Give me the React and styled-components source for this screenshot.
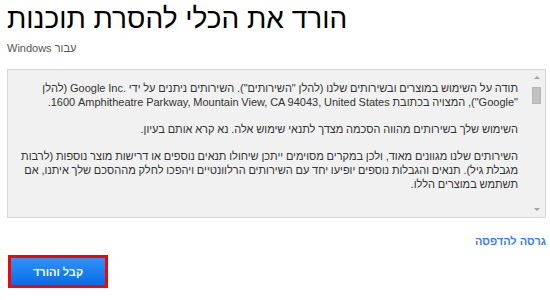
import React from 'react'
import styled, {createGlobalStyle} from 'styled-components'

const GlobalStyle = createGlobalStyle`
  html, body {
    margin: 0;
    padding: 0;
    background: #fff;
    font-family: "Liberation Sans", Arial, sans-serif;
  }
`

const paragraphs = [
    'תודה על השימוש במוצרים ובשירותים שלנו (להלן "השירותים"). השירותים ניתנים על ידי .Google Inc (להלן "Google"), המצויה בכתובת \u200E1600 Amphitheatre Parkway, Mountain View, CA 94043, United States.',
    'השימוש שלך בשירותים מהווה הסכמה מצדך לתנאי שימוש אלה. נא קרא אותם בעיון.',
    'השירותים שלנו מגוונים מאוד, ולכן במקרים מסוימים ייתכן שיחולו תנאים נוספים או דרישות מוצר נוספות (לרבות מגבלת גיל). תנאים והגבלות נוספים יופיעו יחד עם השירותים הרלוונטיים ויהפכו לחלק מההסכם שלך איתנו, אם תשתמש במוצרים הללו.',
]

const App = () => {
    return (
        <Page>
            <GlobalStyle/>
            <Header>
                <Title>הורד את הכלי להסרת תוכנות</Title>
                <Subtitle>עבור Windows</Subtitle>
            </Header>
            <TermsBox>
                <TermsText>
                    {paragraphs.map((p, i) => <Paragraph key={i}>{p}</Paragraph>)}
                </TermsText>
                <Scrollbar>
                    <Arrow $up/>
                    <Track>
                        <Thumb/>
                    </Track>
                    <Arrow/>
                </Scrollbar>
            </TermsBox>
            <Footer>
                <PrintLink href="#">גרסה להדפסה</PrintLink>
                <AcceptButton>קבל והורד</AcceptButton>
            </Footer>
        </Page>
    )
}

export default App

const Page = styled.div`
  width: 550px;
  height: 300px;
  padding: 0 4px 0 7px;
  box-sizing: border-box;
  display: flex;
  flex-direction: column;
`

const Header = styled.header`
  display: flex;
  flex-direction: column;
  align-items: flex-start;
  padding-top: 2px;
`

const Title = styled.h1`
  direction: rtl;
  margin: 0;
  font-size: 28px;
  font-weight: normal;
  color: #000;
  line-height: 34px;
`

const Subtitle = styled.div`
  direction: rtl;
  margin-top: 6px;
  font-size: 11px;
  color: #555;
`

const TermsBox = styled.div`
  margin-top: 15px;
  height: 149px;
  display: flex;
  background: #f1f1f1;
  border: 1px solid #d6d6d6;
  box-sizing: border-box;
`

const TermsText = styled.div`
  flex: 1;
  direction: rtl;
  overflow: hidden;
  padding: 11px 10px 0 3px;
  font-size: 11px;
  line-height: 14px;
  word-spacing: -0.3px;
  color: #333;
`

const Paragraph = styled.p`
  margin: 0 0 13px;
`

const Scrollbar = styled.div`
  width: 17px;
  display: flex;
  flex-direction: column;
  align-items: center;
  padding: 6px 0;
  box-sizing: border-box;
`

const Arrow = styled.div`
  width: 0;
  height: 0;
  border-left: 3px solid transparent;
  border-right: 3px solid transparent;
  ${p => p.$up
    ? 'border-bottom: 3px solid #a3a3a3;'
    : 'border-top: 3px solid #a3a3a3;'}
`

const Track = styled.div`
  flex: 1;
  width: 100%;
  display: flex;
  justify-content: center;
  padding-top: 8px;
`

const Thumb = styled.div`
  width: 9px;
  height: 17px;
  background: #c1c1c1;
  border: 1px solid #b5b5b5;
  box-sizing: border-box;
`

const Footer = styled.div`
  display: flex;
  flex-direction: column;
  align-items: flex-end;
  margin-top: 17px;
`

const PrintLink = styled.a`
  direction: rtl;
  font-size: 11px;
  font-weight: bold;
  color: #3b7fe8;
  text-decoration: none;
`

const AcceptButton = styled.button`
  align-self: flex-start;
  margin-top: 8px;
  margin-left: 1px;
  width: 100px;
  height: 33px;
  border: 3px solid #f00;
  background: linear-gradient(#2f93f7, #0a6ce6);
  color: #fff;
  font-family: "Liberation Sans", Arial, sans-serif;
  font-size: 11px;
  font-weight: bold;
  direction: rtl;
  cursor: pointer;
`
